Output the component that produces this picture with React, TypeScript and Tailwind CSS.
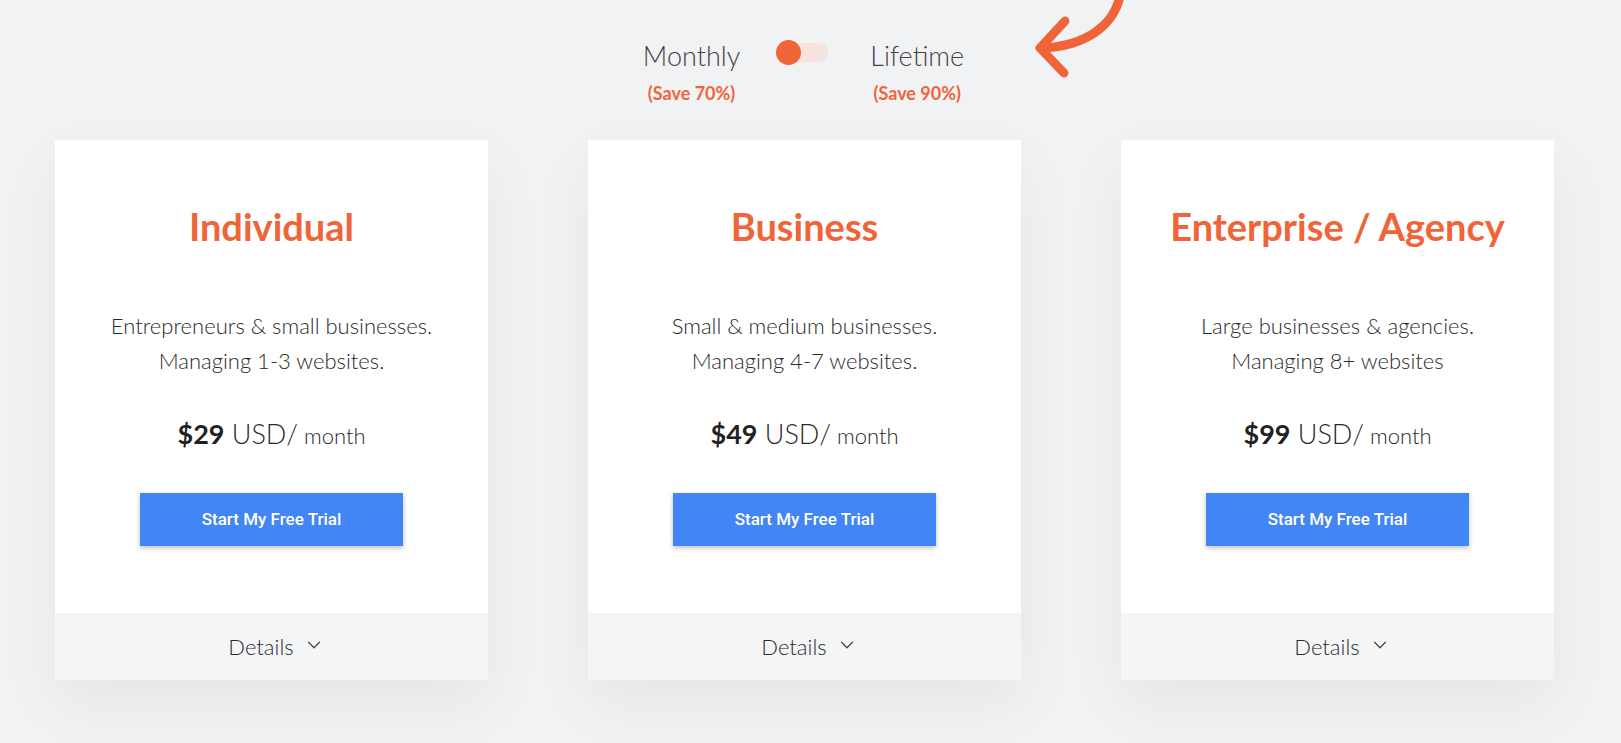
import { ChevronDown } from 'lucide-react'

const plans = [
  { name: 'Individual', lines: ['Entrepreneurs & small businesses.', 'Managing 1-3 websites.'], price: '$29' },
  { name: 'Business', lines: ['Small & medium businesses.', 'Managing 4-7 websites.'], price: '$49' },
  { name: 'Enterprise / Agency', lines: ['Large businesses & agencies.', 'Managing 8+ websites'], price: '$99' },
]

function CurvedArrow() {
  return (
    <svg
      className="absolute left-[1026px] top-0 overflow-visible"
      width="110"
      height="80"
      viewBox="0 0 110 80"
      fill="none"
      stroke="#f0643a"
      strokeLinecap="round"
      strokeLinejoin="round"
    >
      <path d="M94,-4 C88,24 62,46 16,48" strokeWidth="9" />
      <path d="M39,21 L14,48 L38,73" strokeWidth="9" />
    </svg>
  )
}

export default function App() {
  return (
    <div className="relative min-h-[743px] bg-[#f1f2f4] font-['Lato',sans-serif] text-[#3b3b3b]">
      <CurvedArrow />

      {/* billing switch */}
      <div className="flex justify-center pt-[38px] pr-[14px]">
        <div className="flex flex-col items-center">
          <span className="text-[27px] font-light leading-[36px] text-[#444]">Monthly</span>
          <span className="mt-[9px] text-[18px] font-bold leading-[20px] text-[#f0643a]">(Save 70%)</span>
        </div>
        <div className="ml-[36px] mr-[42px] mt-[2px] relative h-[25px] w-[52px]">
          <div className="absolute left-[8px] right-0 top-[3px] h-[19px] rounded-full bg-[#f6e3dd]" />
          <div className="absolute left-0 top-0 h-[25px] w-[25px] rounded-full bg-[#f0643a]" />
        </div>
        <div className="flex flex-col items-center">
          <span className="text-[27px] font-light leading-[36px] text-[#444]">Lifetime</span>
          <span className="mt-[9px] text-[18px] font-bold leading-[20px] text-[#f0643a]">(Save 90%)</span>
        </div>
      </div>

      {/* plan cards */}
      <div className="flex gap-[100px] pl-[55px] pt-[37px]">
        {plans.map(plan => (
          <div key={plan.name} className="flex w-[433px] flex-col bg-white shadow-[0_24px_60px_rgba(0,0,0,0.05)]">
            <div className="flex flex-col items-center pt-[64px] pb-[67px]">
              <h2 className="text-[38px] font-bold leading-[44px] text-[#f0643a]">{plan.name}</h2>
              <div className="mt-[60px] text-center text-[22px] font-light leading-[35px] text-[#2a2a2a]">
                {plan.lines.map(l => (
                  <p key={l}>{l}</p>
                ))}
              </div>
              <p className="mt-[38px] leading-[36px] text-[#2a2a2a]">
                <span className="text-[27px] font-bold text-[#222]">{plan.price}</span>
                <span className="text-[27px] font-light"> USD/</span>
                <span className="text-[22px] font-light"> month</span>
              </p>
              <button className="mt-[37px] h-[53px] w-[263px] bg-[#4285f4] font-['Roboto',sans-serif] text-[17px] font-medium text-white shadow-[0_2px_5px_rgba(0,0,0,0.25)]">
                Start My Free Trial
              </button>
            </div>
            <div className="flex h-[67px] items-center justify-center gap-[9px] bg-[#f4f5f7] pl-[10px]">
              <span className="text-[22px] font-light text-[#2a2a2a]">Details</span>
              <ChevronDown className="-mt-[4px] h-[22px] w-[22px] text-[#444]" strokeWidth={1.3} />
            </div>
          </div>
        ))}
      </div>
    </div>
  )
}
